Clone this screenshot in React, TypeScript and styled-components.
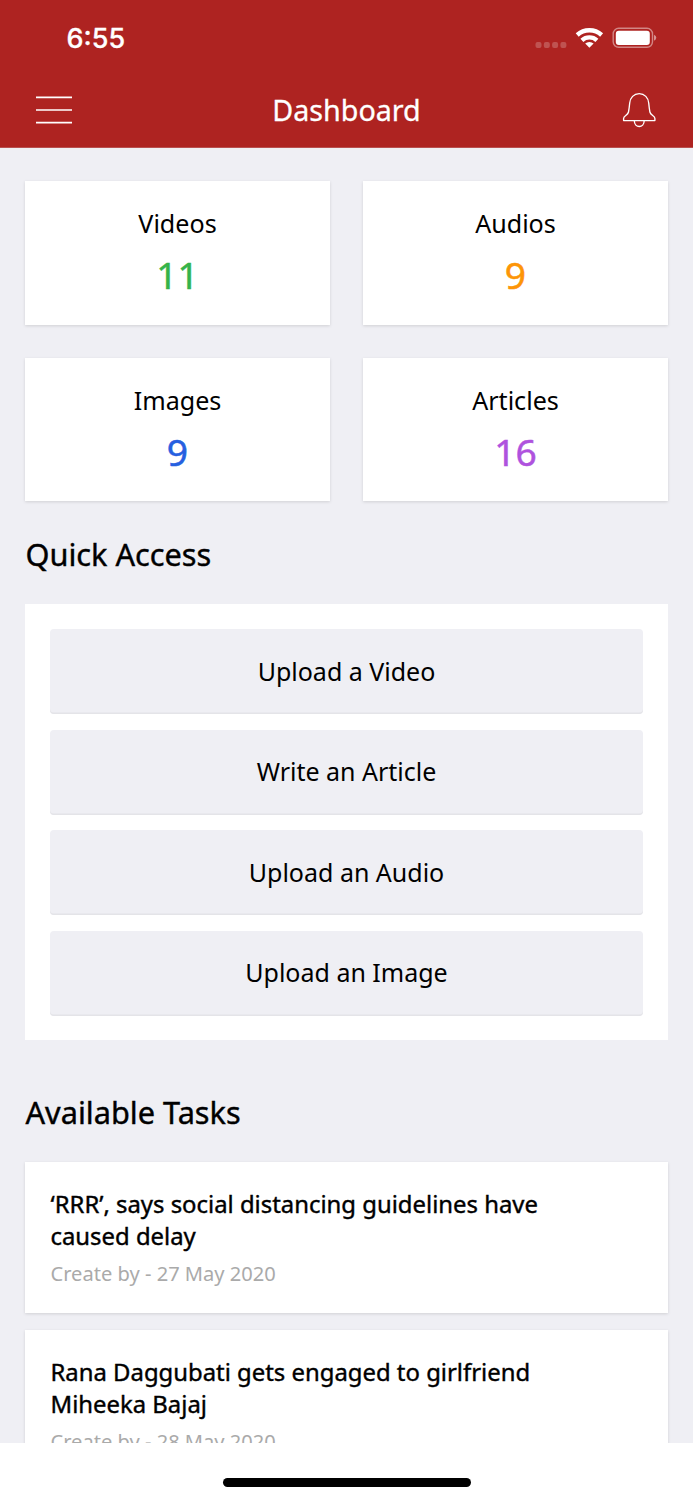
import React from 'react';
import styled, { createGlobalStyle } from 'styled-components';

const Global = createGlobalStyle`
  * { box-sizing: border-box; }
  body { margin: 0; background: #efeff4; font-family: "Noto Sans", sans-serif; color: #000; }
`;

const Screen = styled.div`
  height: 1500px;
  overflow: hidden;
  display: flex;
  flex-direction: column;
  background: #efeff4;
`;
const Header = styled.header`
  height: 148px;
  flex: none;
  background: #ae2321;
  border-bottom: 1px solid #b9504f;
  color: #fff;
`;
const StatusBar = styled.div`
  height: 74px;
  padding: 2px 36px 0 66.5px;
  display: flex;
  align-items: center;
  justify-content: space-between;
`;
const Clock = styled.span`
  padding-top: 2px;
  font: 500 27px/36px Inter, sans-serif;
  letter-spacing: 0;
  -webkit-text-stroke: 0.3px;
`;
const StatusIcons = styled.svg`
  width: 122px;
  height: 24px;
  display: block;
`;
const NavBar = styled.div`
  height: 72px;
  padding: 0 36px;
  display: flex;
  align-items: center;
  justify-content: space-between;
`;
const Title = styled.h1`
  margin: 0;
  font-size: 28.7px;
  line-height: 40px;
  font-weight: 400;
  -webkit-text-stroke: 0.3px;
`;
const NavIcon = styled.svg<{ $weight: number }>`
  display: block;
  width: 36px;
  height: 38px;
  fill: none;
  stroke: #fff;
  stroke-width: ${(p) => p.$weight};
`;
const Content = styled.main`
  flex: none;
  height: 1295px;
  overflow: hidden;
  padding: 33px 25px 0;
`;
const Stats = styled.section`
  display: grid;
  grid-template-columns: 1fr 1fr;
  gap: 33px;
`;
const StatCard = styled.div`
  height: 143.5px;
  padding: 23px 0;
  background: #fff;
  box-shadow: 0 1px 3px rgba(0, 0, 0, 0.13);
  text-align: center;
`;
const StatLabel = styled.div`
  font-size: 25.1px;
  line-height: 38px;
`;
const StatValue = styled.div<{ $color: string }>`
  margin-top: 5px;
  font-size: 37.2px;
  line-height: 55px;
  font-weight: 400;
  -webkit-text-stroke: 0.5px;
  color: ${(p) => p.$color};
`;
const SectionTitle = styled.h2<{ $top: number }>`
  margin: ${(p) => p.$top}px 0 28px;
  padding-left: 0.5px;
  font-size: 30.7px;
  line-height: 44px;
  font-weight: 400;
  -webkit-text-stroke: 0.4px;
`;
const QuickPanel = styled.section`
  height: 435.5px;
  padding: 25px 25.4px 0;
  background: #fff;
  display: flex;
  flex-direction: column;
  gap: 15.5px;
`;
const QuickButton = styled.button`
  height: 85px;
  flex: none;
  padding: 0 0 1.5px;
  border: 0;
  border-radius: 4px;
  background: #efeff4;
  box-shadow: inset 0 -1.5px 0 #e4e4e8;
  font: 400 25px/38px "Noto Sans", sans-serif;
  color: #000;
`;
const TaskCard = styled.article`
  height: 151px;
  margin-bottom: 17px;
  padding: 26px 25.5px 0;
  background: #fff;
  box-shadow: 0 1px 3px rgba(0, 0, 0, 0.13);
`;
const TaskTitle = styled.h3`
  margin: 0;
  width: 520px;
  font-size: 23.88px;
  line-height: 32px;
  font-weight: 400;
  -webkit-text-stroke: 0.4px;
`;
const TaskMeta = styled.div`
  margin-top: 7px;
  font-size: 20.1px;
  line-height: 30px;
  color: #aaa;
`;
const HomeArea = styled.footer`
  flex: 1;
  padding-top: 35px;
  background: #fff;
`;
const HomeIndicator = styled.div`
  width: 248px;
  height: 8.5px;
  margin: 0 auto;
  border-radius: 5px;
  background: #000;
`;

const stats = [
  { label: 'Videos', value: 11, color: '#35b34a' },
  { label: 'Audios', value: 9, color: '#fd9507' },
  { label: 'Images', value: 9, color: '#2660e0' },
  { label: 'Articles', value: 16, color: '#af52de' },
];
const actions = ['Upload a Video', 'Write an Article', 'Upload an Audio', 'Upload an Image'];
const tasks = [
  { title: '‘RRR’, says social distancing guidelines have caused delay', meta: 'Create by - 27 May 2020' },
  { title: 'Rana Daggubati gets engaged to girlfriend Miheeka Bajaj', meta: 'Create by - 28 May 2020' },
];

export default function App() {
  return (
    <Screen>
      <Global />
      <Header>
        <StatusBar>
          <Clock>6:55</Clock>
          <StatusIcons viewBox="535 26 122 24">
            <g fill="#fff" fillOpacity=".22">
              <rect x="535.5" y="42" width="6" height="6" rx="2" />
              <rect x="543.8" y="42" width="6" height="6" rx="2" />
              <rect x="552.1" y="42" width="6" height="6" rx="2" />
              <rect x="560.4" y="42" width="6" height="6" rx="2" />
            </g>
            <g fill="none" stroke="#fff" strokeWidth="4.4">
              <path d="M577.2 35a18.2 18.2 0 0 1 24.4 0" />
              <path d="M581.9 40.3a11.2 11.2 0 0 1 15 0" />
            </g>
            <path fill="#fff" d="M589.4 47.8l-4.2-4.2a6 6 0 0 1 8.4 0z" />
            <rect x="613.2" y="28.3" width="39.3" height="19" rx="5.5" fill="none" stroke="#fff" strokeOpacity=".45" strokeWidth="1.4" />
            <rect x="615.8" y="30.7" width="34" height="14.3" rx="3" fill="#fff" />
            <path d="M654 34.8q2.3 1 2.3 3t-2.3 3z" fill="#fff" fillOpacity=".5" />
          </StatusIcons>
        </StatusBar>
        <NavBar>
          <NavIcon $weight={1.7} viewBox="36 91 36 38"><path d="M36 97.3h36M36 110h36M36 122.7h36" /></NavIcon>
          <Title>Dashboard</Title>
          <NavIcon $weight={1.35} viewBox="621 91 36 38">
            <path strokeLinejoin="round" d="M639.2 93.6c-5.4 0-9.1 4.2-9.5 9.4-.4 4-.7 6.6-1.2 9-.7 3.2-4.9 3.8-4.9 6.4v2.2h31.3v-2.2c0-2.6-4.3-3.2-5-6.4-.5-2.4-.8-5-1.2-9-.4-5.2-4.1-9.4-9.5-9.4z" />
            <path d="M634.3 120.6c0 7.9 9.9 7.9 9.9 0" />
          </NavIcon>
        </NavBar>
      </Header>
      <Content>
        <Stats>
          {stats.map((s) => (
            <StatCard key={s.label}>
              <StatLabel>{s.label}</StatLabel>
              <StatValue $color={s.color}>{s.value}</StatValue>
            </StatCard>
          ))}
        </Stats>
        <SectionTitle $top={31}>Quick Access</SectionTitle>
        <QuickPanel>
          {actions.map((a) => <QuickButton key={a}>{a}</QuickButton>)}
        </QuickPanel>
        <SectionTitle $top={50.5}>Available Tasks</SectionTitle>
        {tasks.map((t) => (
          <TaskCard key={t.title}>
            <TaskTitle>{t.title}</TaskTitle>
            <TaskMeta>{t.meta}</TaskMeta>
          </TaskCard>
        ))}
      </Content>
      <HomeArea><HomeIndicator /></HomeArea>
    </Screen>
  );
}
